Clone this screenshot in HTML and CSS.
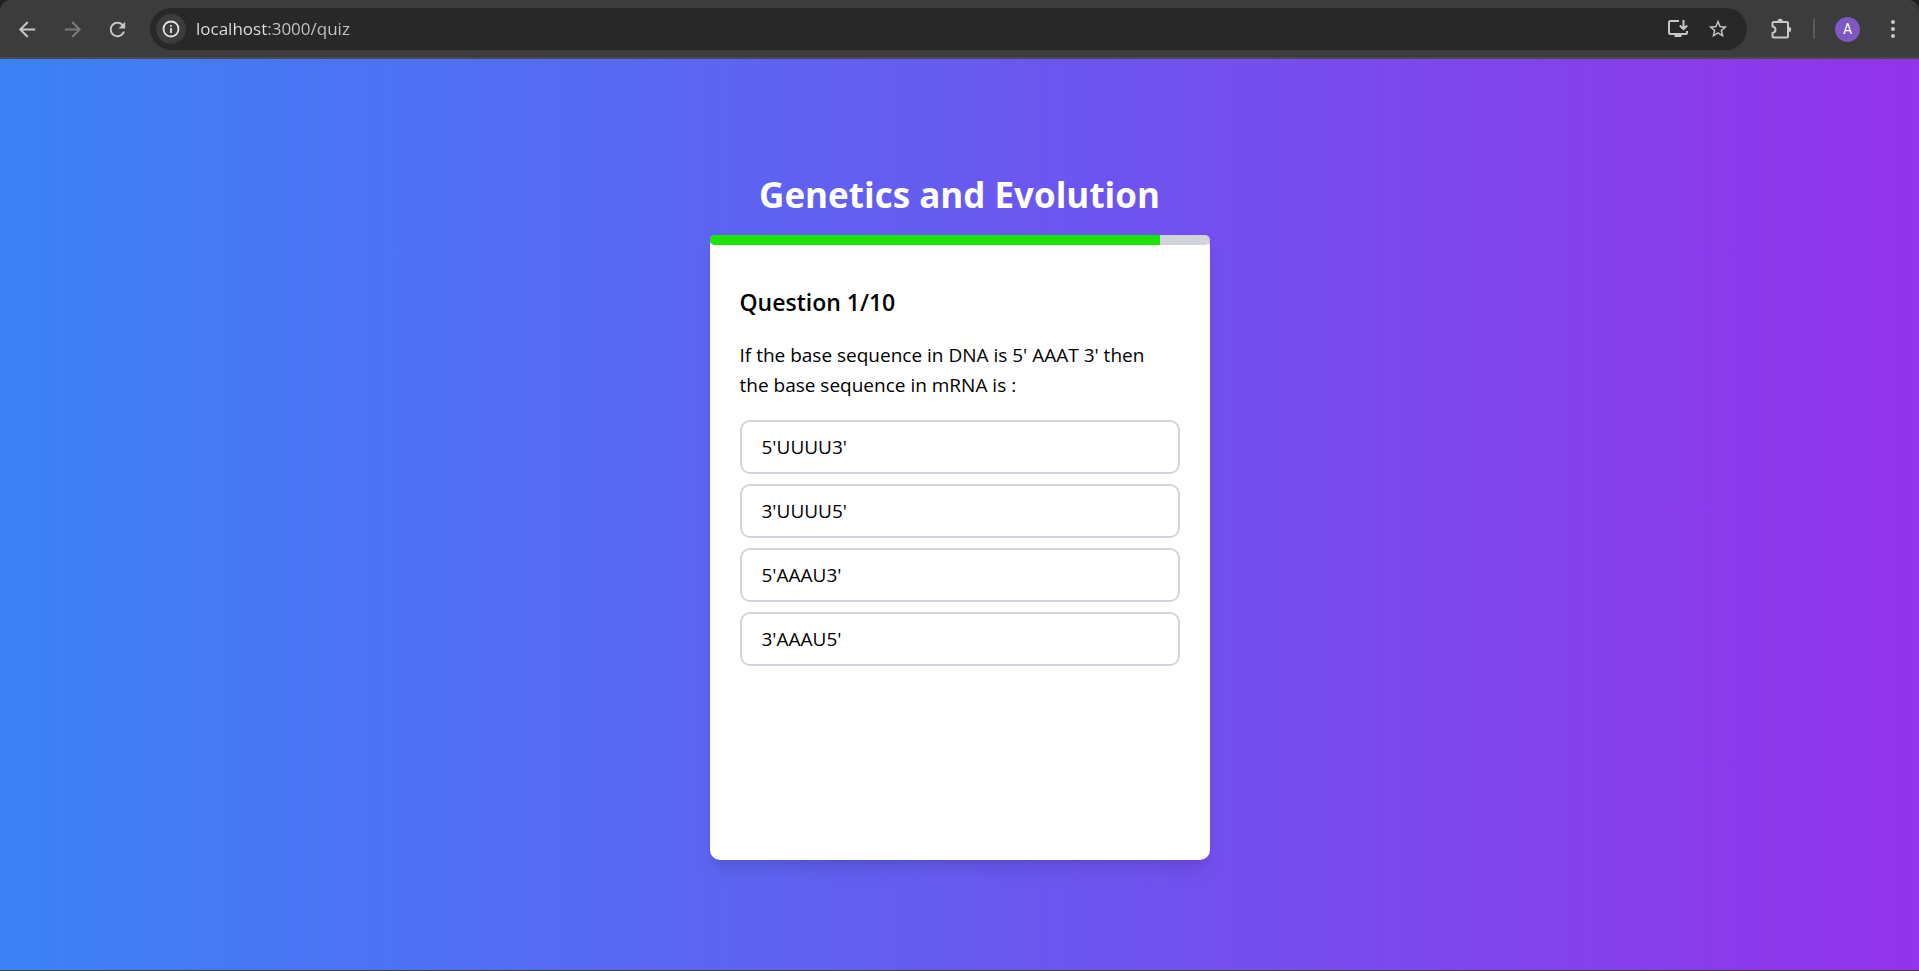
FILE: index.html
```html
<!DOCTYPE html>
<html lang="en">
<head>
<meta charset="utf-8">
<title>Quiz</title>
<link rel="stylesheet" href="styles.css">
</head>
<body>
<header class="browser">
  <div class="toolbar">
    <nav class="nav" aria-label="Browser navigation">
      <button class="nav-btn" type="button" aria-label="Back">
        <svg class="icon-arrow" viewBox="0 0 24 24" fill="none" stroke="currentColor" stroke-width="2.1"><path d="M20 12H5M12.3 4.2 4.5 12l7.8 7.8"/></svg>
      </button>
      <button class="nav-btn nav-btn-off" type="button" aria-label="Forward">
        <svg class="icon-arrow" viewBox="0 0 24 24" fill="none" stroke="currentColor" stroke-width="2.1"><path d="M4 12h15M11.7 4.2l7.8 7.8-7.8 7.8"/></svg>
      </button>
      <button class="nav-btn" type="button" aria-label="Reload">
        <svg class="icon-arrow" viewBox="0 0 24 24" fill="currentColor"><path d="M17.650 6.350C16.200 4.900 14.210 4 12 4c-4.420 0-8 3.580-8 8s3.580 8 8 8c3.730 0 6.840-2.550 7.730-6h-2.080c-.820 2.330-3.040 4-5.650 4-3.310 0-6-2.690-6-6s2.690-6 6-6c1.660 0 3.140.690 4.220 1.780L13 11h7V4l-2.350 2.350z"/></svg>
      </button>
    </nav>
    <div class="omnibox">
      <button class="site-info" type="button" aria-label="Site information">
        <svg class="icon-info" viewBox="0 0 18 18" fill="none" stroke="currentColor" stroke-width="1.8"><circle cx="9" cy="9" r="7.500"/><path d="M9 8v5M9 5v1.800"/></svg>
      </button>
      <input class="address" type="text" aria-label="Address" value="localhost:3000/quiz">
      <button class="box-btn" type="button" aria-label="Install app">
        <svg class="icon-box" viewBox="0 0 22 22" fill="none" stroke="currentColor" stroke-width="2"><path d="M12 3H3.500Q2 3 2 4.500v10Q2 16 3.500 16h15q1.500 0 1.500-1.500V13M16.500 2v9M12.800 7.500l3.700 3.700 3.700-3.700"/><path d="M7.500 16v3h7v-3z" fill="currentColor" stroke="none"/></svg>
      </button>
      <button class="box-btn" type="button" aria-label="Bookmark this page">
        <svg class="icon-box" viewBox="0 0 24 24" fill="currentColor"><path d="M22 9.240l-7.190-.620L12 2 9.190 8.630 2 9.240l5.460 4.730L5.820 21 12 17.270 18.180 21l-1.630-7.030L22 9.240zM12 15.400l-3.760 2.270 1-4.280-3.320-2.880 4.380-.380L12 6.100l1.710 4.040 4.380.380-3.320 2.880 1 4.280L12 15.400z"/></svg>
      </button>
    </div>
    <div class="actions">
      <button class="box-btn" type="button" aria-label="Extensions">
        <svg class="icon-box" viewBox="0 0 22 22" fill="none" stroke="currentColor" stroke-width="2"><path d="M3.500 4H17q1 0 1 1v13.500q0 1-1 1H3.500q-1 0-1-1V15q3-.5 3-3.200T2.500 8.500V5q0-1 1-1z" stroke-linejoin="round"/><path d="M7.500 3.500a2.700 2.700 0 0 1 5.400 0zM18.500 8.700a2.700 2.700 0 0 1 0 5.400z" fill="currentColor" stroke="none"/></svg>
      </button>
      <span class="divider"></span>
      <button class="avatar" type="button" aria-label="Profile">A</button>
      <button class="menu-btn" type="button" aria-label="Menu">
        <svg class="icon-menu" viewBox="0 0 6 20" fill="currentColor"><circle cx="3" cy="3" r="2"/><circle cx="3" cy="10" r="2"/><circle cx="3" cy="17" r="2"/></svg>
      </button>
    </div>
  </div>
</header>
<main class="page">
  <h1 class="title">Genetics and Evolution</h1>
  <section class="card">
    <div class="progress"><div class="progress-fill" style="width: 90%"></div></div>
    <div class="card-body">
      <h2 class="count">Question 1/10</h2>
      <p class="question">If the base sequence in DNA is 5' AAAT 3' then the base sequence in mRNA is :</p>
      <div class="options">
        <button class="option" type="button">5'UUUU3'</button>
        <button class="option" type="button">3'UUUU5'</button>
        <button class="option" type="button">5'AAAU3'</button>
        <button class="option" type="button">3'AAAU5'</button>
      </div>
    </div>
  </section>
</main>
</body>
</html>
```

FILE: styles.css
```css
* {
  box-sizing: border-box;
  margin: 0;
}

body {
  min-height: 100vh;
  display: flex;
  flex-direction: column;
  font-family: "Segoe UI", "Open Sans", "Noto Sans", sans-serif;
  color: #000;
  border-bottom: 1px solid #46423f;
}

button {
  font: inherit;
  color: inherit;
  background: none;
  border: 0;
  padding: 0;
  cursor: pointer;
}

svg {
  display: block;
}

/* Browser toolbar */
.browser {
  background: #1f1f1f;
}

.toolbar {
  display: flex;
  align-items: center;
  padding: 8px 14px 7px 5px;
  background: #3c3c3c;
  border-bottom: 2px solid #4a4a4a;
  border-radius: 10px 10px 0 0;
  color: #c7c7c7;
}

.nav {
  display: flex;
  margin-right: 10px;
}

.nav-btn {
  width: 45px;
  height: 42px;
  display: grid;
  place-items: center;
}

.nav-btn-off {
  color: #7b7b7b;
}

.icon-arrow {
  width: 23px;
  height: 23px;
}

.omnibox {
  flex: 1;
  height: 42px;
  display: flex;
  align-items: center;
  padding: 0 9px 0 6px;
  background: #282828;
  border-radius: 21px;
}

.site-info {
  width: 30px;
  height: 30px;
  display: grid;
  place-items: center;
  margin-right: 10px;
  border-radius: 50%;
  background: #3c3c3c;
  color: #e3e3e3;
}

.icon-info {
  width: 18px;
  height: 18px;
}

/* The host is brighter than the rest of the address */
.address {
  flex: 1;
  min-width: 0;
  height: 30px;
  padding: 0;
  border: 0;
  outline: 0;
  font: inherit;
  font-size: 17px;
  line-height: 30px;
  color: transparent;
  caret-color: #e3e3e3;
  background: linear-gradient(to right, #e3e3e3 71px, #c7c7c7 71px);
  background-clip: text;
}

.box-btn {
  width: 40px;
  height: 40px;
  display: grid;
  place-items: center;
}

.icon-box {
  width: 22px;
  height: 22px;
}

.actions {
  display: flex;
  align-items: center;
  margin-left: 14px;
}

.divider {
  width: 2px;
  height: 20px;
  margin: 0 20px 0 12px;
  background: #5c5c5c;
}

.avatar {
  width: 25px;
  height: 25px;
  border-radius: 50%;
  background: #7e57c2;
  color: #fff;
  font-family: Roboto, sans-serif;
  font-size: 14px;
  line-height: 25px;
}

.menu-btn {
  width: 25px;
  height: 40px;
  margin-left: 20px;
  display: grid;
  place-items: center;
}

.icon-menu {
  width: 6px;
  height: 20px;
}

/* Quiz */
.page {
  flex: 1;
  display: flex;
  flex-direction: column;
  align-items: center;
  justify-content: center;
  padding: 21px 20px 20px;
  background: linear-gradient(to right, #3b82f6, #9333ea);
}

.title {
  margin-bottom: 15px;
  font-size: 35px;
  font-weight: 700;
  line-height: 50px;
  text-align: center;
  color: #fff;
}

.card {
  width: 100%;
  max-width: 500px;
  min-height: 625px;
  background: #fff;
  border-radius: 10px;
  box-shadow: 0 12px 19px -4px rgba(0, 0, 0, 0.1), 0 5px 8px -5px rgba(0, 0, 0, 0.1);
}

.progress {
  height: 10px;
  overflow: hidden;
  border-radius: 5px;
  background: #d1d5db;
}

.progress-fill {
  height: 100%;
  background: #1ce600;
}

.card-body {
  padding: 40px 30px 30px;
}

.count {
  margin-bottom: 20px;
  font-size: 23px;
  font-weight: 600;
  line-height: 35px;
}

.question {
  margin-bottom: 20px;
  padding-right: 20px;
  font-size: 19px;
  line-height: 30px;
}

.options {
  display: grid;
  gap: 10px;
}

.option {
  padding: 10px 20px;
  border: 2px solid #d1d5db;
  border-radius: 10px;
  font-size: 19px;
  line-height: 30px;
  text-align: left;
}
```
